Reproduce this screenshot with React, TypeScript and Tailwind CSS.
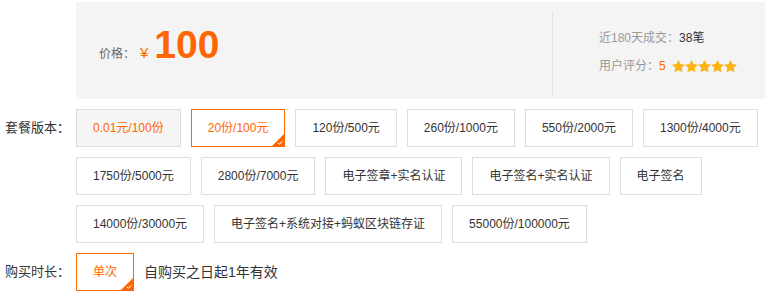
import React from "react";

const PACKAGES = [
  "0.01元/100份",
  "20份/100元",
  "120份/500元",
  "260份/1000元",
  "550份/2000元",
  "1300份/4000元",
  "1750份/5000元",
  "2800份/7000元",
  "电子签章+实名认证",
  "电子签名+实名认证",
  "电子签名",
  "14000份/30000元",
  "电子签名+系统对接+蚂蚁区块链存证",
  "55000份/100000元",
];

function Star() {
  return (
    <svg width="13" height="13" viewBox="0 0 24 24" className="block">
      <path
        d="M12 0l3.7 7.6 8.3 1.1-6.1 5.8 1.5 8.3L12 18.8l-7.4 4 1.5-8.3L0 8.7l8.3-1.1z"
        fill="#fcb414"
      />
    </svg>
  );
}

function Corner() {
  return (
    <svg width="12" height="12" viewBox="0 0 12 12" className="absolute right-0 bottom-0 block">
      <polygon points="12,0 12,12 0,12" fill="#ff6600" />
      <polyline points="5.8,8.8 7.6,10.3 10.2,7.4" fill="none" stroke="#fff" strokeWidth="1" />
    </svg>
  );
}

function Option({ label, selected, hover }: { label: string; selected?: boolean; hover?: boolean }) {
  const cls = selected
    ? "border-[#ff6600] text-[#ff6600] bg-white"
    : hover
    ? "border-[#dddddd] text-[#ff6600] bg-[#f5f5f5]"
    : "border-[#dddddd] text-[#333333] bg-white";
  return (
    <div className={`relative h-[38px] px-4 border flex items-center text-[12px] whitespace-nowrap ${cls}`}>
      {label}
      {selected && <Corner />}
    </div>
  );
}

export default function App() {
  return (
    <div
      className="w-[765px] h-[301px] bg-white overflow-hidden"
      style={{ fontFamily: '"Liberation Sans", "Noto Sans CJK SC", sans-serif' }}
    >
      {/* Price panel */}
      <div className="ml-[76px] mt-[2px] h-[97px] bg-[#f4f4f4] flex">
        <div className="flex-1 pl-[23px] pt-[23px] flex items-baseline">
          <span className="text-[12px] text-[#666666]">价格：</span>
          <span className="text-[15px] text-[#ff6600] ml-[5px] mr-[6px]">¥</span>
          <span className="text-[39px] font-bold text-[#ff6600] leading-none">100</span>
        </div>
        <div className="w-[213px] mt-[10px] h-[84px] border-l border-[#e3e3e3] pl-[46px] pb-[4px] flex flex-col justify-center text-[12px] text-[#999999]">
          <div className="leading-[28px]">
            近180天成交：<span className="text-[#333333]">38笔</span>
          </div>
          <div className="leading-[28px] flex items-center">
            用户评分：<span className="text-[#ff6600] mr-[6px]">5</span>
            <span className="flex">
              <Star />
              <Star />
              <Star />
              <Star />
              <Star />
            </span>
          </div>
        </div>
      </div>

      {/* Packages */}
      <div className="mt-[10px] flex">
        <div className="w-[76px] pl-[5px] h-[38px] leading-[38px] text-[13px] text-[#333333] shrink-0">套餐版本：</div>
        <div className="w-[689px] flex flex-wrap gap-[10px]">
          {PACKAGES.map((p, i) => (
            <Option key={p} label={p} hover={i === 0} selected={i === 1} />
          ))}
        </div>
      </div>

      {/* Duration */}
      <div className="mt-[10px] flex items-center">
        <div className="w-[76px] pl-[5px] h-[38px] leading-[38px] text-[13px] text-[#333333] shrink-0">购买时长：</div>
        <Option label="单次" selected />
        <span className="ml-[10px] text-[14px] text-[#333333]">自购买之日起1年有效</span>
      </div>
    </div>
  );
}
